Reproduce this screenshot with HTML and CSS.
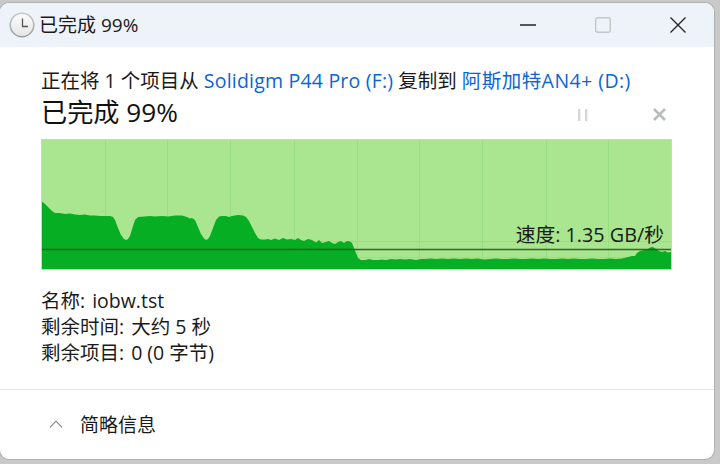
FILE: index.html
```html
<!DOCTYPE html>
<html lang="zh">
<head>
<meta charset="utf-8">
<title>已完成 99%</title>
<link rel="stylesheet" href="styles.css">
</head>
<body>
<div class="window">
  <header class="titlebar">
    <svg class="clock" width="26" height="26" viewBox="0 0 26 26">
      <defs>
        <linearGradient id="ring" x1="0" y1="0" x2="0" y2="1"><stop offset="0" stop-color="#c8c8c8"/><stop offset="1" stop-color="#9c9c9c"/></linearGradient>
        <linearGradient id="face" x1="0" y1="0" x2="0" y2="1"><stop offset="0" stop-color="#fbfbfb"/><stop offset="1" stop-color="#e6e6e6"/></linearGradient>
      </defs>
      <circle cx="13" cy="13" r="12.500" fill="url(#ring)"/>
      <circle cx="13" cy="13" r="11" fill="url(#face)"/>
      <path d="M13.500 6.500v8H19" fill="none" stroke="#555" stroke-width="1.300"/>
    </svg>
    <span class="title">已完成 99%</span>
    <div class="controls">
      <svg class="ctl" width="16" height="16" viewBox="0 0 16 16"><path d="M0 8h16" stroke="#222" stroke-width="1.300"/></svg>
      <svg class="ctl" width="16" height="16" viewBox="0 0 16 16"><rect x=".7" y=".7" width="14.600" height="14.600" rx="2" fill="none" stroke="#c4c6c8" stroke-width="1.400"/></svg>
      <svg class="ctl" width="16" height="16" viewBox="0 0 16 16"><path d="M.5.5l15 15M15.500.5l-15 15" stroke="#222" stroke-width="1.300"/></svg>
    </div>
  </header>
  <main class="content">
    <p class="copyline">正在将 1 个项目从 <a class="link">Solidigm P44 Pro (F:)</a> 复制到 <a class="link link-dest">阿斯加特AN4+ (D:)</a></p>
    <div class="status">
      <h1 class="heading">已完成 99%</h1>
      <div class="actions">
        <svg width="12" height="12" viewBox="0 0 12 12"><path d="M1 0h2.400v12H1zM8 0h2.400v12H8z" fill="#d6d6d6"/></svg>
        <svg width="13" height="13" viewBox="0 0 13 13"><path d="M1 1l11 11M12 1L1 12" stroke="#b8bcbf" stroke-width="2.600"/></svg>
      </div>
    </div>
    <div class="chart">
      <svg class="graph" width="629" height="129" viewBox="42 140 629 129">
        <rect x="41" y="139" width="630" height="130" fill="#a9e68f"/>
        <g class="grid">
          <path d="M105.500 139v130M167.500 139v130M230.500 139v130M294.500 139v130M357.500 139v130M419.500 139v130M482.500 139v130M546.500 139v130M608.500 139v130"/>
          <path d="M41 241.500h630M41 257.500h630"/>
        </g>
        <polygon class="area" points="41,269 41,201 44,203 48,207 52,211 55,213 60,213 65,214 70,213.500 75,214.500 80,215 85,214.500 90,215.500 95,215.500 100,216 105,216 110,216 113,217 115,220 118,228 121,235 124,239 126,240 128,239 130,236 133,226 135,220 138,217 145,216.500 150,216 155,216.500 162,216 168,216.500 175,215.500 182,215.500 187,217 190,218.500 192,218 195,220 198,227 201,234 204,238.500 206,240 208,239 210,236 213,228 216,220 219,216.500 222,216 226,216 229,217 232,216 238,215 243,215.500 246,217 249,221 252,227 255,233 258,238 261,239.500 265,239.500 268,239 271,240 275,238.500 279,240 283,238 287,239.500 291,239 295,240 298,238 301,240 304,241 308,239 312,240 316,242.500 319,240 322,243 326,242 329,241 332,243 335,244 338,242 341,241 344,243 347,241 350,241.500 352,243 354,248 356,253 358,258 361,260 365,260 369,259 373,260 378,260 382,259.500 386,260 391,259 396,259.500 400,259 405,259.500 410,259 416,260 421,259 426,259 431,258.500 436,259 442,258.500 448,259 454,258.500 460,259 466,258.500 472,259 478,258.500 484,259.500 490,259 496,258.500 502,259 508,259 514,258.500 520,259 526,259 532,258.500 538,259 544,258.500 550,259 556,259 562,258.500 568,259 574,258.500 580,259 586,259 592,258.500 598,259 604,259 610,258.500 616,259 622,258.500 628,257 632,256 635,256 637,253 640,251 644,250 647,250 650,247.500 653,247 656,249 659,251 662,252 665,251 668,252.500 671,252 671,269"/>
        <path class="rate" d="M41 249.500h630"/>
      </svg>
      <span class="speed">速度: 1.35 GB/秒</span>
    </div>
    <dl class="details">
      <div class="row"><dt>名称:</dt><dd>iobw.tst</dd></div>
      <div class="row"><dt>剩余时间:</dt><dd>大约 5 秒</dd></div>
      <div class="row"><dt>剩余项目:</dt><dd>0 (0 字节)</dd></div>
    </dl>
  </main>
  <footer class="footer">
    <svg width="14" height="8" viewBox="0 0 14 8"><path d="M1 7.300l6-6.300 6 6.300" fill="none" stroke="#8a8a8a" stroke-width="1.200"/></svg>
    <span class="more">简略信息</span>
  </footer>
</div>
</body>
</html>
```

FILE: styles.css
```css
* { box-sizing: border-box; }
html, body { margin: 0; height: 100%; }
body {
  width: 720px;
  height: 464px;
  overflow: hidden;
  background: #c9c9c9;
  padding: 3px 6px 5px 0;
  font-family: "Open Sans", "Noto Sans CJK SC", sans-serif;
  font-size: 19.500px;
  color: #1a1a1a;
}
.window {
  width: 714px;
  height: 456px;
  display: flex;
  flex-direction: column;
  background: #fff;
  border-radius: 9px;
  overflow: hidden;
  box-shadow: 0 0 0 1px #b0b0b0;
}
.titlebar {
  height: 44px;
  flex: none;
  display: flex;
  align-items: center;
  padding-left: 9px;
  background: #eef3f9;
}
.clock { flex: none; margin-right: 4px; }
.title { line-height: 44px; font-size: 19px; }
.controls {
  margin-left: auto;
  display: flex;
  align-items: center;
  gap: 59px;
  padding-right: 28px;
}
.content {
  flex: 1;
  padding: 0 42px 0 41px;
}
.copyline { margin: 22px 0 0; line-height: 24px; white-space: nowrap; }
.link { color: #0a66d0; letter-spacing: .2px; }
.link-dest { letter-spacing: .45px; }
.status {
  display: flex;
  align-items: center;
  justify-content: space-between;
  height: 36px;
  margin-top: 1px;
}
.heading { margin: 0; font-size: 26.200px; font-weight: 400; line-height: 36px; color: #111; }
.actions { display: flex; align-items: center; gap: 64px; padding: 5px 6px 0 0; }
.chart {
  position: relative;
  width: 631px;
  height: 131px;
  border: 1px solid #d0d0d0;
  margin-top: 9px;
}
.graph { display: block; }
.grid path { stroke: #9ade82; stroke-width: 1; fill: none; }
.area { fill: #06ae24; }
.rate { stroke: #1f4f1f; stroke-width: 1.300; opacity: .85; }
.speed {
  position: absolute;
  right: 7px;
  bottom: 22px;
  line-height: 24px;
  font-size: 19.800px;
}
.details { margin: 18px 0 0; }
.row { display: flex; gap: 7px; line-height: 26px; }
.row dt, .row dd { margin: 0; }
.footer {
  height: 70px;
  flex: none;
  display: flex;
  align-items: center;
  gap: 17px;
  padding: 0 0 2px 49px;
  border-top: 1px solid #e4e4e4;
  font-size: 19px;
}
```
